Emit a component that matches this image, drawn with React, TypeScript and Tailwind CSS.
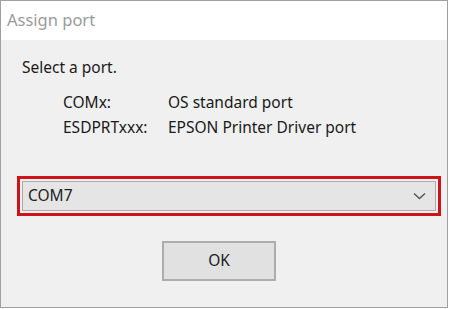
export default function App() {
  return (
    <div className="w-[450px] h-[309px] bg-white" style={{ fontFamily: '"Noto Sans", "Open Sans", sans-serif' }}>
      <div className="w-[448px] h-[308px] border border-[#a0a0a0] flex flex-col">
        <div className="h-[39px] bg-white flex items-center pl-[6px] text-[16.5px] text-[#9a9a9a]">
          Assign port
        </div>
        <div className="flex-1 bg-[#f0f0f0] flex flex-col text-[#1a1a1a] text-[15.5px]">
          <div className="pl-[21px] pt-[17px] leading-[20px]">Select a port.</div>
          <div className="pl-[62px] pt-[13px] grid grid-cols-[105px_1fr] leading-[25px]">
            <div>COMx:</div>
            <div>OS standard port</div>
            <div>ESDPRTxxx:</div>
            <div>EPSON Printer Driver port</div>
          </div>
          <div className="mt-[36px] ml-[16px] mr-[6px] border-[3px] border-[#d0121b] p-[2px]">
            <div className="h-[30px] bg-[#e5e5e5] border border-[#adadad] flex items-center justify-between pl-[5px] pr-[9px]">
              <span className="text-[#222]">COM7</span>
              <svg width="13" height="8" viewBox="0 0 13 8" fill="none">
                <path d="M1 1.5 L6.5 6.5 L12 1.5" stroke="#555" strokeWidth="1.4" />
              </svg>
            </div>
          </div>
          <div className="flex justify-center mt-[25px] pr-[10px]">
            <div className="w-[114px] h-[40px] bg-[#e1e1e1] border-2 border-[#adadad] flex items-center justify-center">
              OK
            </div>
          </div>
        </div>
      </div>
    </div>
  );
}
